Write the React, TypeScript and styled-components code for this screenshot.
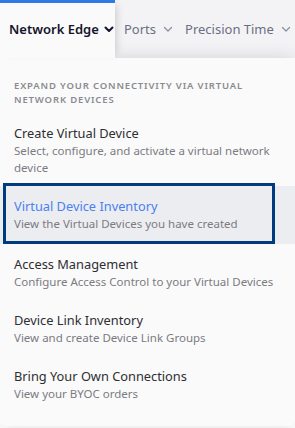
import React from "react";
import styled, { createGlobalStyle } from "styled-components";

const Global = createGlobalStyle`
  html, body { margin: 0; padding: 0; background: #ffffff; }
  body { font-family: "Noto Sans", "Open Sans", sans-serif; -webkit-font-smoothing: antialiased; }
  * { box-sizing: border-box; }
`;

const Shell = styled.div`
  width: 295px;
  height: 428px;
  overflow: hidden;
  display: flex;
  flex-direction: column;
`;

const Header = styled.nav`
  display: flex;
  align-items: stretch;
  height: 58px;
  background: #f3f3f6;
  flex-shrink: 0;
`;

const Tab = styled.div<{ $active?: boolean }>`
  display: flex;
  align-items: center;
  gap: 7px;
  padding: 0 3px 1px 9px;
  font-size: 13px;
  font-weight: ${(p) => (p.$active ? 600 : 400)};
  color: ${(p) => (p.$active ? "#14142b" : "#6b6f80")};
  white-space: nowrap;
  ${(p) =>
    p.$active
      ? `
    position: relative;
    z-index: 2;
    width: 115px;
    gap: 5px;
    background: #fafafa;
    border-top: 3px solid #2f7be6;
    padding-bottom: 4px;
    box-shadow: 6px 0 8px -5px rgba(0,0,0,0.18);
  `
      : ""}
`;

const Chevron = styled.svg<{ $active?: boolean }>`
  width: 10px;
  height: 10px;
  flex-shrink: 0;
  stroke: ${(p) => (p.$active ? "#14142b" : "#8d90a0")};
  stroke-width: ${(p) => (p.$active ? 2 : 1.3)};
  fill: none;
`;

const Panel = styled.div`
  position: relative;
  z-index: 1;
  background: #fafafa;
  border-radius: 0 0 5px 5px;
  box-shadow: 0 0 18px rgba(0, 0, 0, 0.13);
  padding: 21px 0 0;
  height: 368px;
  flex-shrink: 0;
`;

const SectionLabel = styled.div`
  padding: 0 14px;
  font-size: 9.5px;
  line-height: 14px;
  font-weight: 600;
  letter-spacing: 0.85px;
  text-transform: uppercase;
  color: #8a8a90;
  margin-bottom: 6px;
`;

const ItemList = styled.div`
  display: flex;
  flex-direction: column;
`;

const ItemRow = styled.div<{ $selected?: boolean }>`
  background: ${(p) => (p.$selected ? "#ecedf1" : "transparent")};
  display: flex;
`;

const ItemLink = styled.a<{ $selected?: boolean }>`
  display: block;
  text-decoration: none;
  padding: 11px 14px 10px;
  width: 100%;
  ${(p) =>
    p.$selected
      ? `
    width: 272px;
    margin-left: 3px;
    margin-top: -3px;
    padding: 11px 8px 9px;
    border: 3px solid #003b7d;
  `
      : ""}
`;

const ItemTitle = styled.div<{ $selected?: boolean }>`
  font-size: 12.8px;
  line-height: 18px;
  color: ${(p) => (p.$selected ? "#4a80f0" : "#2e2e33")};
`;

const ItemDesc = styled.div`
  font-size: 11.5px;
  line-height: 17px;
  color: #7b7b82;
`;

const tabs = [
  { label: "Network Edge", active: true },
  { label: "Ports" },
  { label: "Precision Time" },
];

const items = [
  { title: "Create Virtual Device", desc: "Select, configure, and activate a virtual network device" },
  { title: "Virtual Device Inventory", desc: "View the Virtual Devices you have created", selected: true },
  { title: "Access Management", desc: "Configure Access Control to your Virtual Devices" },
  { title: "Device Link Inventory", desc: "View and create Device Link Groups" },
  { title: "Bring Your Own Connections", desc: "View your BYOC orders" },
];

export default function App() {
  return (
    <>
      <Global />
      <Shell>
        <Header>
          {tabs.map((t) => (
            <Tab key={t.label} $active={t.active}>
              {t.label}
              <Chevron viewBox="0 0 10 10" $active={t.active}>
                <path d="M1.5 3.5 L5 7 L8.5 3.5" strokeLinecap="round" strokeLinejoin="round" />
              </Chevron>
            </Tab>
          ))}
        </Header>
        <Panel>
          <SectionLabel>Expand your connectivity via virtual network devices</SectionLabel>
          <ItemList>
            {items.map((it) => (
              <ItemRow key={it.title} $selected={it.selected}>
                <ItemLink href="#" $selected={it.selected}>
                  <ItemTitle $selected={it.selected}>{it.title}</ItemTitle>
                  <ItemDesc>{it.desc}</ItemDesc>
                </ItemLink>
              </ItemRow>
            ))}
          </ItemList>
        </Panel>
      </Shell>
    </>
  );
}
